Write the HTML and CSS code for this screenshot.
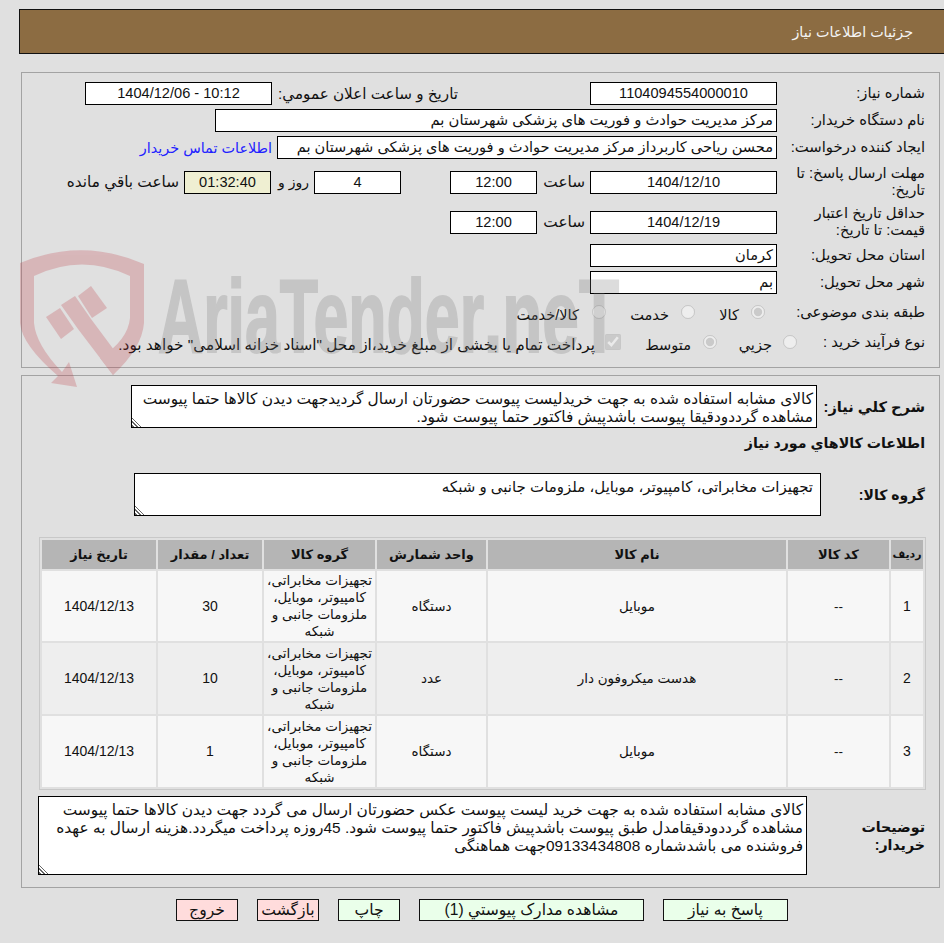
FILE: index.html
```html
<!DOCTYPE html>
<html lang="fa" dir="rtl">
<head>
    <meta charset="UTF-8">
    <title>جزئیات اطلاعات نیاز</title>
    <link rel="stylesheet" href="styles.css">
</head>
<body>

<header class="page-title">جزئیات اطلاعات نیاز</header>

<section class="panel panel-info">
    <div class="row">
        <label class="lbl">شماره نیاز:</label>
        <span class="box w187 center">1104094554000010</span>
        <label class="lbl-mid">تاريخ و ساعت اعلان عمومي:</label>
        <span class="box w187 center" dir="ltr">1404/12/06 - 10:12</span>
    </div>
    <div class="row">
        <label class="lbl">نام دستگاه خریدار:</label>
        <span class="box w562 txt">مرکز مدیریت حوادث و فوریت های پزشکی شهرستان بم</span>
    </div>
    <div class="row">
        <label class="lbl">ایجاد کننده درخواست:</label>
        <span class="box w500">محسن ریاحی کاربرداز مرکز مدیریت حوادث و فوریت های پزشکی شهرستان بم</span>
        <a class="contact" href="#">اطلاعات تماس خریدار</a>
    </div>
    <div class="row row-tall">
        <label class="lbl">مهلت ارسال پاسخ: تا تاریخ:</label>
        <span class="box w187 center">1404/12/10</span>
        <span class="word w-saat">ساعت</span>
        <span class="box w87 center">12:00</span>
        <span class="box w87 center ml-day">4</span>
        <span class="word w-day">روز و</span>
        <span class="box w87 center timer">01:32:40</span>
        <span class="word">ساعت باقي مانده</span>
    </div>
    <div class="row row-tall">
        <label class="lbl">حداقل تاریخ اعتبار قیمت: تا تاریخ:</label>
        <span class="box w187 center">1404/12/19</span>
        <span class="word w-saat">ساعت</span>
        <span class="box w87 center">12:00</span>
    </div>
    <div class="row after-tall">
        <label class="lbl">استان محل تحویل:</label>
        <span class="box w187">کرمان</span>
    </div>
    <div class="row">
        <label class="lbl">شهر محل تحویل:</label>
        <span class="box w187">بم</span>
    </div>
    <div class="row row-opt">
        <label class="lbl">طبقه بندی موضوعی:</label>
        <input class="radio r-first" type="radio" name="cat" checked disabled>
        <span class="opt o-kala">کالا</span>
        <input class="radio" type="radio" name="cat" disabled>
        <span class="opt o-khedmat">خدمت</span>
        <input class="radio" type="radio" name="cat" disabled>
        <span class="opt o-last">کالا/خدمت</span>
    </div>
    <div class="row row-opt">
        <label class="lbl lbl-short">نوع فرآیند خرید :</label>
        <input class="radio" type="radio" name="kind" disabled>
        <span class="opt o-jozi">جزيي</span>
        <input class="radio" type="radio" name="kind" checked disabled>
        <span class="opt o-mota">متوسط</span>
        <input class="check" type="checkbox" checked disabled>
        <span class="opt o-pay">پرداخت تمام یا بخشی از مبلغ خرید،از محل "اسناد خزانه اسلامی" خواهد بود.</span>
    </div>
</section>

<section class="panel panel-items">
    <div class="row-area">
        <label class="lbl-bold l-one">شرح کلي نیاز:</label>
        <textarea class="area a-one" readonly>کالای مشابه استفاده شده به جهت خریدلیست پیوست حضورتان ارسال گردیدجهت دیدن کالاها حتما پیوست مشاهده گرددودقیقا پیوست باشدپیش فاکتور حتما پیوست شود.</textarea>
    </div>
    <h3 class="sub-title">اطلاعات کالاهاي مورد نیاز</h3>
    <div class="row-area group-row">
        <label class="lbl-bold l-two">گروه کالا:</label>
        <textarea class="area a-two" readonly>تجهیزات مخابراتی، کامپیوتر، موبایل، ملزومات جانبی و شبکه</textarea>
    </div>

    <table class="items">
        <thead>
            <tr>
                <th class="c1">ردیف</th>
                <th class="c2">کد کالا</th>
                <th class="c3">نام کالا</th>
                <th class="c4">واحد شمارش</th>
                <th class="c5">گروه کالا</th>
                <th class="c6">تعداد / مقدار</th>
                <th class="c7">تاریخ نیاز</th>
            </tr>
        </thead>
        <tbody>
            <tr>
                <td class="num">1</td>
                <td>--</td>
                <td>موبایل</td>
                <td>دستگاه</td>
                <td>تجهیزات مخابراتی، کامپیوتر، موبایل، ملزومات جانبی و شبکه</td>
                <td class="num">30</td>
                <td class="num">1404/12/13</td>
            </tr>
            <tr>
                <td class="num">2</td>
                <td>--</td>
                <td>هدست میکروفون دار</td>
                <td>عدد</td>
                <td>تجهیزات مخابراتی، کامپیوتر، موبایل، ملزومات جانبی و شبکه</td>
                <td class="num">10</td>
                <td class="num">1404/12/13</td>
            </tr>
            <tr>
                <td class="num">3</td>
                <td>--</td>
                <td>موبایل</td>
                <td>دستگاه</td>
                <td>تجهیزات مخابراتی، کامپیوتر، موبایل، ملزومات جانبی و شبکه</td>
                <td class="num">1</td>
                <td class="num">1404/12/13</td>
            </tr>
        </tbody>
    </table>

    <div class="row-area notes-row">
        <label class="lbl-bold l-notes">توضیحات<br>خریدار:</label>
        <textarea class="area a-notes" readonly>کالای مشابه استفاده شده به جهت خرید لیست پیوست عکس حضورتان ارسال می گردد جهت دیدن کالاها حتما پیوست مشاهده گرددودقیقامدل طبق پیوست باشدپیش فاکتور حتما پیوست شود. 45روزه پرداخت میگردد.هزینه ارسال به عهده فروشنده می باشدشماره 09133434808جهت هماهنگی</textarea>
    </div>
</section>

<div class="actions">
    <button class="btn b-reply">پاسخ به نیاز</button>
    <button class="btn b-docs">مشاهده مدارک پیوستي (1)</button>
    <button class="btn">چاپ</button>
    <button class="btn red">بازگشت</button>
    <button class="btn red">خروج</button>
</div>

<!-- watermark over the whole page -->
<svg class="watermark" width="944" height="943" viewBox="0 0 944 943">
    <g class="wm-red">
        <path d="M20 263 Q82 237 144 264 V323 Q142 348 113 375 L100 358 Q128 340 130 318 V276 Q82 253 34 276 V323 Q36 345 62 372 L69 362 L77 387 L51 383 L58 376 Q22 345 20 323 Z"/>
        <path d="M61 305 L75 296 L91 319 L123 362 L113 375 L78 329 Z"/>
        <path d="M46 317 L60 308 L74 329 L61 339 Z"/>
        <path d="M78 296 L91 286 L107 308 L92 318 Z"/>
    </g>
    <text class="wm-text" x="158" y="352" textLength="326" lengthAdjust="spacingAndGlyphs">AriaTender</text>
    <text class="wm-text" x="484" y="352" textLength="135" lengthAdjust="spacingAndGlyphs">.neT</text>
</svg>

</body>
</html>
```

FILE: styles.css
```css
html, body {
    margin: 0;
    padding: 0;
}
body {
    position: relative;
    height: 943px;
    overflow: hidden;
    background-color: #e0e0e0;
    color: #111;
    font-family: "Liberation Sans", "DejaVu Sans", sans-serif;
    font-size: 14.6px;
}
.page-title {
    box-sizing: border-box;
    height: 45px;
    margin: 9px 0 0 19px;
    padding-right: 31px;
    line-height: 44px;
    background-color: #8c6c42;
    border: 1px solid #111;
    border-right: none;
    color: #f4f4f4;
    font-size: 14.3px;
}
.panel {
    box-sizing: border-box;
    width: 919px;
    margin-right: 4px;
    padding-top: 9px;
    border: 1px solid #a3a3a3;
}
.panel-info {
    height: 296px;
    margin-top: 18px;
    display: flex;
    flex-direction: column;
    gap: 4px;
}
.panel-items {
    height: 513px;
    margin-top: 7px;
}
.row {
    display: flex;
    align-items: center;
    height: 23px;
}
.row-tall {
    height: 34px;
    margin-top: 2px;
}
.after-tall {
    margin-top: 1px;
}
.row-opt {
    height: 24px;
    margin-top: 2px;
}
.lbl {
    box-sizing: border-box;
    width: 148px;
    margin-right: 14px;
    font-size: 14.8px;
    line-height: 17px;
}
.lbl-short {
    width: 128px;
    white-space: nowrap;
}
.lbl-mid {
    width: 186px;
    margin-right: 132px;
    font-size: 15.2px;
    white-space: nowrap;
}
.box {
    box-sizing: border-box;
    display: block;
    height: 23px;
    padding: 0 3px;
    line-height: 21px;
    background-color: #fff;
    border: 1px solid #000;
    white-space: nowrap;
    overflow: hidden;
}
.txt {
    font-size: 14.8px;
}
.center {
    text-align: center;
}
.w187 {
    width: 187px;
}
.w87 {
    width: 87px;
}
.w562 {
    width: 562px;
}
.w500 {
    width: 500px;
}
.timer {
    background-color: #efefd2;
}
.ml-day {
    margin-right: 49px;
}
.word {
    padding-right: 5px;
    font-size: 15.3px;
    white-space: nowrap;
}
.w-saat {
    box-sizing: border-box;
    width: 53px;
}
.w-day {
    box-sizing: border-box;
    width: 43px;
    font-size: 14px;
}
.contact {
    margin-right: 5px;
    color: #2222ff;
    font-size: 14.4px;
    text-decoration: none;
    white-space: nowrap;
}
.radio {
    width: 14px;
    height: 14px;
    margin: 0;
    flex: none;
}
.check {
    width: 16px;
    height: 16px;
    margin: 0;
    flex: none;
}
.r-first {
    margin-right: 12px;
}
.opt {
    box-sizing: border-box;
    padding-top: 5px;
    white-space: nowrap;
}
.o-kala {
    width: 56px;
    padding-right: 12px;
}
.o-khedmat {
    width: 75px;
    padding-right: 12px;
}
.o-last {
    padding-right: 13px;
}
.o-jozi {
    width: 66px;
    padding-right: 11px;
}
.o-mota {
    width: 82px;
    padding-right: 12px;
}
.o-pay {
    padding-right: 10px;
    font-size: 15.3px;
}
.row-area {
    display: flex;
    align-items: center;
}
.lbl-bold {
    box-sizing: border-box;
    margin-right: 14px;
    font-weight: bold;
    line-height: 18px;
}
.l-one {
    width: 108px;
}
.l-two {
    width: 104px;
    font-size: 14px;
}
.l-notes {
    width: 118px;
    font-size: 14.2px;
}
.area {
    box-sizing: border-box;
    display: block;
    padding: 4px 3px 0;
    background-color: #fff;
    border: 1px solid #000;
    color: #111;
    font-family: "Liberation Sans", "DejaVu Sans", sans-serif;
    font-size: 15.4px;
    line-height: 18px;
    overflow: hidden;
    outline: none;
}
.area::-webkit-resizer {
    background: linear-gradient(45deg, #666 0 1.5px, transparent 1.5px 3px, #666 3px 4.5px, transparent 4.5px 6px, #666 6px 7px, transparent 7px);
}
.a-one {
    width: 686px;
    height: 43px;
}
.a-two {
    width: 687px;
    height: 43px;
    padding-right: 7px;
    font-size: 15px;
}
.a-notes {
    width: 769px;
    height: 79px;
}
.sub-title {
    margin: 5px 14px 0 0;
    font-size: 14.2px;
    line-height: 20px;
}
.group-row {
    margin-top: 20px;
}
.notes-row {
    margin-top: 6px;
}
.items {
    box-sizing: border-box;
    width: 887px;
    margin: 21px 13px 0 0;
    table-layout: fixed;
    border-collapse: separate;
    border-spacing: 2px;
    border: 1px solid #c8c8c8;
    font-size: 13.5px;
    text-align: center;
}
.items th {
    height: 29px;
    padding: 0;
    background-color: #b5b5b5;
    font-size: 13px;
}
.items .c1 {
    font-size: 11px;
}
.items td {
    height: 70px;
    padding: 0 2px;
    line-height: 17px;
    background-color: #f7f7f7;
}
.items tbody tr + tr td {
    height: 71px;
}
.items tbody tr:nth-child(2) td {
    background-color: #eeeeee;
}
.items .num {
    font-size: 14px;
}
.c2 {
    width: 101px;
}
.c3 {
    width: 298px;
}
.c4 {
    width: 109px;
}
.c5 {
    width: 111px;
}
.c6 {
    width: 104px;
}
.c7 {
    width: 114px;
}
.actions {
    display: flex;
    gap: 19px;
    margin: 11px 156px 0 0;
}
.btn {
    box-sizing: border-box;
    width: 62px;
    height: 22px;
    padding: 0;
    background-color: #eaffea;
    border: 1px solid #111;
    color: #111;
    font-family: "Liberation Sans", "DejaVu Sans", sans-serif;
    font-size: 15.6px;
    line-height: 20px;
}
.b-reply {
    width: 125px;
}
.b-docs {
    width: 225px;
}
.red {
    background-color: #ffdcdc;
}
.watermark {
    position: absolute;
    top: 0;
    left: 0;
    direction: ltr;
    pointer-events: none;
}
.wm-red {
    fill: #be3c46;
    opacity: 0.25;
}
.wm-text {
    fill: #787878;
    stroke: #787878;
    stroke-width: 2px;
    opacity: 0.25;
    font-family: "Liberation Sans Narrow", "Liberation Sans", sans-serif;
    font-weight: bold;
    font-size: 104px;
}
```
